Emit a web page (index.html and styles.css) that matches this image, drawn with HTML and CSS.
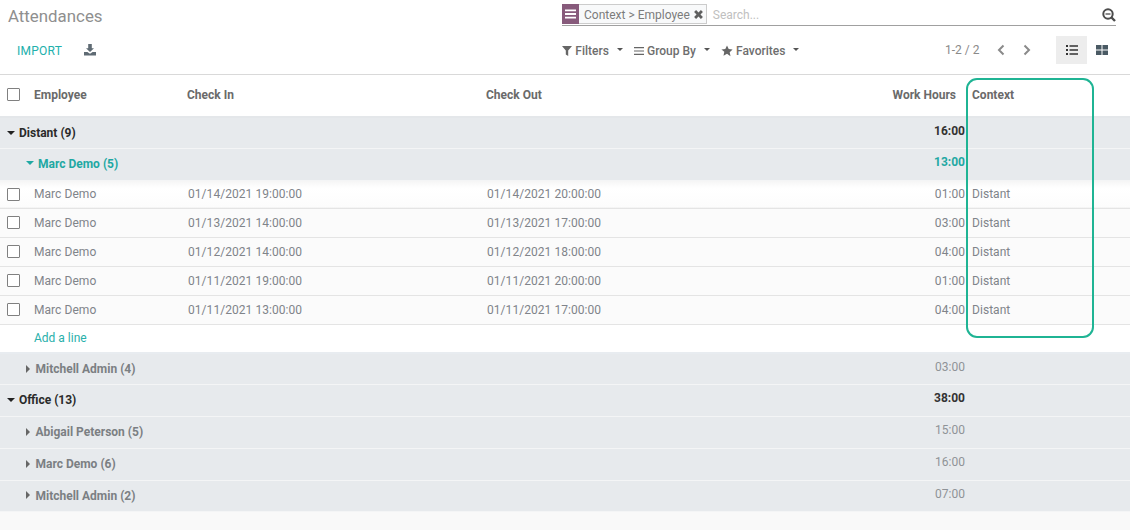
FILE: index.html
```html
<!DOCTYPE html>
<html lang="en">
<head>
<meta charset="utf-8">
<title>Attendances</title>
<link rel="stylesheet" href="styles.css">
</head>
<body>
<div class="page">
  <header class="panel">
    <div class="panel-left">
      <h1 class="title">Attendances</h1>
      <div class="actions">
        <span class="import">IMPORT</span>
        <svg class="icon download" viewBox="0 0 12 12"><path d="M4.2 0h3.6v4.2H10L6 8 2 4.2h2.2zM0 8h3.4L6 9.8 8.6 8H12v3.6H0z"/></svg>
      </div>
    </div>
    <div class="panel-right">
      <div class="search">
        <span class="facet-icon"><svg viewBox="0 0 12 10"><path d="M0 0h12v2H0zM0 4h12v2H0zM0 8h12v2H0z"/></svg></span>
        <span class="facet">Context &gt; Employee <svg class="facet-x" viewBox="0 0 10 10"><path d="M1 2.800 2.800 1 5 3.200 7.200 1 9 2.800 6.800 5 9 7.200 7.200 9 5 6.800 2.800 9 1 7.200 3.200 5z"/></svg></span>
        <span class="placeholder">Search...</span>
        <svg class="search-icon" viewBox="0 0 14 14"><circle cx="6" cy="6" r="4.700" fill="none" stroke="#4c4c4c" stroke-width="2"/><path d="M9.500 9.500 13 13" stroke="#4c4c4c" stroke-width="2.400"/><path d="M3.500 6h5" stroke="#4c4c4c" stroke-width="1.300"/></svg>
      </div>
      <div class="tools">
        <div class="menus">
          <span class="menu"><svg class="icon" viewBox="0 0 10 10"><path d="M0 0h10L6.200 4.500V10L3.800 8.500v-4z"/></svg>Filters<i class="caret"></i></span>
          <span class="menu"><svg class="icon" viewBox="0 0 10 10"><path d="M0 1h10v1.200H0zM0 4.400h10v1.200H0zM0 7.800h10V9H0z"/></svg>Group By<i class="caret"></i></span>
          <span class="menu"><svg class="icon star" viewBox="0 0 12 12"><path d="m6 .5 1.700 3.600 3.900.5-2.900 2.700.8 3.900L6 8.800l-3.500 1.900.8-3.900L.4 4.600l3.900-.5z"/></svg>Favorites<i class="caret"></i></span>
        </div>
        <div class="pager-area">
          <span class="pager">1-2 / 2</span>
          <svg class="chev" viewBox="0 0 8 12"><path d="M6.500 1.500 2 6l4.500 4.500" fill="none" stroke="#8a8a8a" stroke-width="2"/></svg>
          <svg class="chev next" viewBox="0 0 8 12"><path d="M1.500 1.500 6 6l-4.500 4.500" fill="none" stroke="#8a8a8a" stroke-width="2"/></svg>
          <div class="views">
            <span class="view active"><svg viewBox="0 0 12 10"><path d="M0 0h2v2H0zM0 4h2v2H0zM0 8h2v2H0zM3.500 .2H12v1.600H3.500zM3.500 4.200H12v1.600H3.500zM3.500 8.200H12v1.600H3.500z"/></svg></span>
            <span class="view grid"><svg viewBox="0 0 12 10"><path d="M0 0h5.500v4.500H0zM6.500 0H12v4.500H6.500zM0 5.500h5.500V10H0zM6.500 5.500H12V10H6.500z"/></svg></span>
          </div>
        </div>
      </div>
    </div>
  </header>

  <table class="list">
    <colgroup>
      <col class="c-check"><col class="c-emp"><col class="c-in"><col class="c-out"><col class="c-hours"><col class="c-ctx">
    </colgroup>
    <thead>
      <tr>
        <th><span class="box"></span></th>
        <th>Employee</th><th>Check In</th><th>Check Out</th><th class="num">Work Hours</th><th class="ctx">Context</th>
      </tr>
    </thead>
    <tbody>
      <tr class="group top short"><td colspan="4"><i class="tri down"></i>Distant (9)</td><td class="hours">16:00</td><td></td></tr>
      <tr class="group sub open"><td colspan="4"><i class="tri down"></i>Marc Demo (5)</td><td class="hours">13:00</td><td></td></tr>
      <tr class="row first"><td><span class="box"></span></td><td>Marc Demo</td><td>01/14/2021 19:00:00</td><td>01/14/2021 20:00:00</td><td class="hours">01:00</td><td class="ctx">Distant</td></tr>
      <tr class="row"><td><span class="box"></span></td><td>Marc Demo</td><td>01/13/2021 14:00:00</td><td>01/13/2021 17:00:00</td><td class="hours">03:00</td><td class="ctx">Distant</td></tr>
      <tr class="row"><td><span class="box"></span></td><td>Marc Demo</td><td>01/12/2021 14:00:00</td><td>01/12/2021 18:00:00</td><td class="hours">04:00</td><td class="ctx">Distant</td></tr>
      <tr class="row"><td><span class="box"></span></td><td>Marc Demo</td><td>01/11/2021 19:00:00</td><td>01/11/2021 20:00:00</td><td class="hours">01:00</td><td class="ctx">Distant</td></tr>
      <tr class="row"><td><span class="box"></span></td><td>Marc Demo</td><td>01/11/2021 13:00:00</td><td>01/11/2021 17:00:00</td><td class="hours">04:00</td><td class="ctx">Distant</td></tr>
      <tr class="add"><td></td><td colspan="5">Add a line</td></tr>
      <tr class="group sub short"><td colspan="4"><i class="tri right"></i>Mitchell Admin (4)</td><td class="hours">03:00</td><td></td></tr>
      <tr class="group top"><td colspan="4"><i class="tri down"></i>Office (13)</td><td class="hours">38:00</td><td></td></tr>
      <tr class="group sub"><td colspan="4"><i class="tri right"></i>Abigail Peterson (5)</td><td class="hours">15:00</td><td></td></tr>
      <tr class="group sub"><td colspan="4"><i class="tri right"></i>Marc Demo (6)</td><td class="hours">16:00</td><td></td></tr>
      <tr class="group sub short"><td colspan="4"><i class="tri right"></i>Mitchell Admin (2)</td><td class="hours">07:00</td><td></td></tr>
    </tbody>
  </table>
  <div class="highlight"></div>
</div>
</body>
</html>
```
FILE: styles.css
```css
* { box-sizing: border-box; }
html, body { margin: 0; height: 100%; }
body {
  background: #f9f9f9;
  font-family: Roboto, "Liberation Sans", sans-serif;
  font-size: 12px;
  color: #666;
  overflow: hidden;
}
.page { position: relative; width: 1130px; height: 530px; }

.panel {
  display: flex;
  justify-content: space-between;
  height: 75px;
  background: #fff;
  border-bottom: 1px solid #d9d9d9;
}
.title {
  margin: 0;
  padding: 6px 0 0 8px;
  font-size: 16.850px;
  line-height: 20px;
  font-weight: 400;
  color: #8f8f8f;
}
.actions {
  display: flex;
  align-items: center;
  gap: 22px;
  padding: 18px 0 0 17px;
}
.import { font-size: 12px; font-weight: 400; color: #21b0ac; letter-spacing: .25px; }
.icon { width: 10px; height: 10px; fill: #666; flex: none; }
.download { width: 12px; height: 12px; margin-top: -2px; fill: #5f6b74; }

.panel-right { width: 554px; margin-right: 14px; padding-top: 4px; }
.search {
  display: flex;
  align-items: flex-start;
  height: 22px;
  border-bottom: 1px solid #a0a0a0;
  position: relative;
}
.facet-icon {
  display: flex;
  align-items: center;
  justify-content: center;
  width: 17px;
  height: 20px;
  background: #875a7b;
}
.facet-icon svg { width: 11px; height: 10px; fill: #fff; }
.facet {
  display: flex;
  align-items: center;
  gap: 3px;
  height: 20px;
  padding: 1px 2px 0 5px;
  background: #f8f9fa;
  border: 1px solid #ccc;
  border-left: 0;
  color: #7c7c7c;
  font-size: 12px;
}
.facet-x { width: 11px; height: 11px; fill: #5f5f5f; }
.placeholder { margin: 4px 0 0 6px; color: #c0c0c0; font-size: 12px; }
.search-icon { position: absolute; right: 0; top: 4px; width: 14px; height: 14px; }

.tools {
  display: flex;
  justify-content: space-between;
  align-items: center;
  padding-top: 10px;
}
.menus { display: flex; gap: 11px; padding-top: 2px; }
.menu { display: inline-flex; align-items: center; gap: 3.300px; font-weight: 500; color: #6e6e6e; }
.star { width: 12px; height: 12px; }
.caret {
  width: 0;
  height: 0;
  margin-left: 4.500px;
  margin-top: -3px;
  border: 3.200px solid transparent;
  border-top-color: #555;
  border-bottom: 0;
}
.pager-area { display: flex; align-items: center; }
.pager { color: #8a8a8a; margin-right: 17.500px; }
.chev { width: 8px; height: 12px; }
.next { margin-left: 18px; margin-right: 25px; }
.views { display: flex; }
.view {
  display: flex;
  align-items: center;
  justify-content: center;
  width: 31px;
  height: 28px;
}
.view.grid { width: 29px; }
.view svg { width: 12px; height: 10px; fill: #4a5a64; }
.view.active { background: #ededed; }
.view.active svg { fill: #333; }

.list {
  width: 1130px;
  border-collapse: collapse;
  table-layout: fixed;
}
.c-check { width: 27px; }
.c-emp { width: 153px; }
.c-in { width: 299px; }
.c-out { width: 400px; }
.c-hours { width: 86px; }
.c-ctx { width: 165px; }

thead tr { height: 42px; background: #fff; border-bottom: 2px solid #e4e7ea; }
th {
  padding: 0 0 2px 7px;
  text-align: left;
  font-weight: 700;
  color: #6a6a6a;
  font-size: 12px;
}
th.num { text-align: right; padding: 0 9px 2px 0; }
th.ctx { padding-left: 7px; }
th:first-child, .row td:first-child { padding-left: 7px; }
.box {
  display: block;
  width: 13px;
  height: 13px;
  background: #fff;
  border: 1.500px solid #808080;
  border-radius: 1px;
}

.group { height: 32px; background: #e7eaed; border-bottom: 1px solid #f4f5f6; }
.group.short { height: 31px; }
.group td { padding: 0 0 0 7px; font-weight: 700; font-size: 12px; color: #7b7f83; }
.group.sub td:first-child { padding-left: 26px; }
.group .hours { font-weight: 400; color: #8f9397; text-align: right; padding: 0 0 4px 0; }
.group.top td { color: #2a2a2a; }
.group.top .hours { font-weight: 700; color: #333; padding-bottom: 4px; }
.group.open td { color: #1fa8a3; }
.group.open td:first-child { padding-bottom: 1px; }
.group.open .hours { font-weight: 700; color: #1fa8a3; }

.tri { display: inline-block; width: 0; height: 0; vertical-align: middle; }
.tri.down {
  margin: 0 4px 2px 0;
  border-left: 4px solid transparent;
  border-right: 4px solid transparent;
  border-top: 4.500px solid currentColor;
}
.group.top .tri.down { color: #222; }
.tri.right {
  margin: 0 5.500px 2px 0;
  border-top: 4px solid transparent;
  border-bottom: 4px solid transparent;
  border-left: 4.500px solid #666;
}

.row { height: 29px; background: #fbfbfb; border-bottom: 1px solid #e4e4e4; }
.row.first { height: 28px; background: linear-gradient(#f4f4f4, #fff 8px, #fcfcfc); }
.row td { padding: 0 0 0 8px; color: #80848a; font-size: 12px; letter-spacing: .05px; }
.row td:nth-child(2) { padding-left: 7px; }
.row .hours { text-align: right; padding: 0; }
.row td.ctx { padding-left: 7px; }

.add { height: 29px; background: #fff; border-bottom: 2px solid #e8ecf0; }
.add td { padding: 0 0 0 7px; color: #29b0ab; font-size: 12px; }

.highlight {
  position: absolute;
  left: 966px;
  top: 78px;
  width: 128px;
  height: 260px;
  border: 2px solid #1fb494;
  border-radius: 11px;
  pointer-events: none;
}
```
